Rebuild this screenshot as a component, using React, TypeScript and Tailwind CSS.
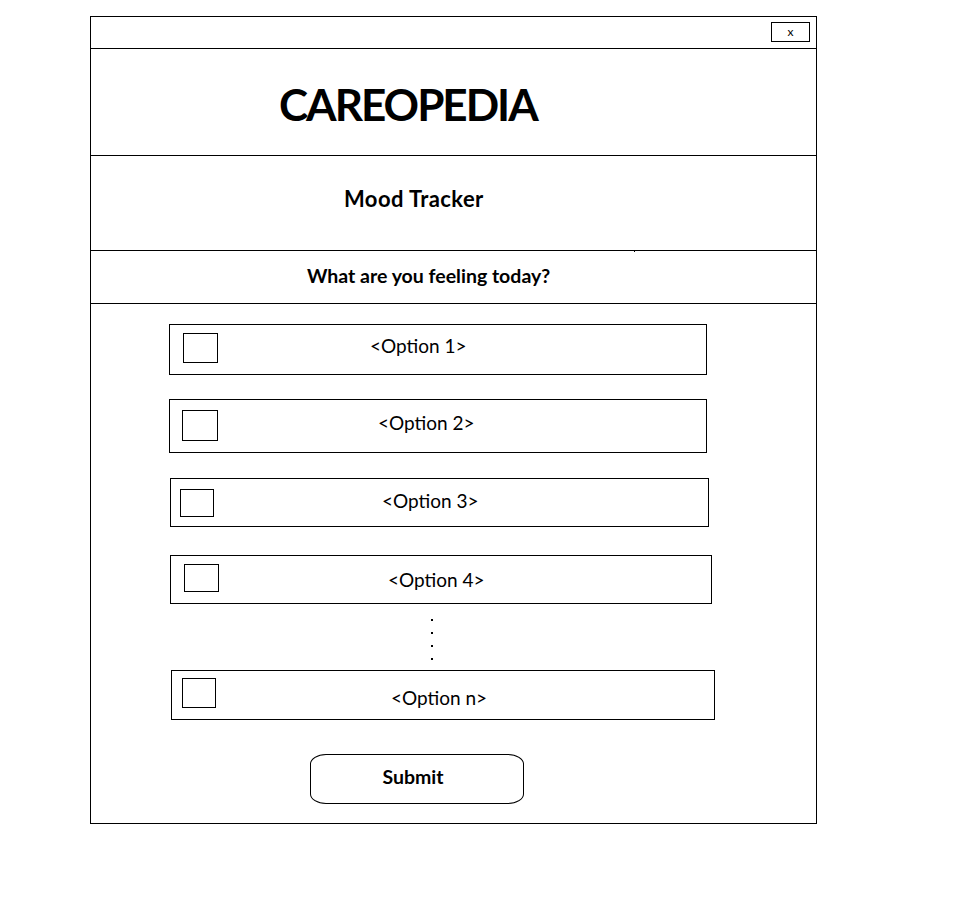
import React from 'react';

const OPTIONS = [
  { label: '<Option 1>', box: 'ml-[78px] w-[538px] h-[51px] mt-[20px]', cb: 'ml-[13px] mt-[8px] w-[35px] h-[30px]', text: 'ml-[152px] mb-[8px]' },
  { label: '<Option 2>', box: 'ml-[78px] w-[538px] h-[54px] mt-[24px]', cb: 'ml-[12px] mt-[10px] w-[36px] h-[31px]', text: 'ml-[160px] mb-[8px]' },
  { label: '<Option 3>', box: 'ml-[79px] w-[539px] h-[49px] mt-[25px]', cb: 'ml-[9px] mt-[10px] w-[34px] h-[28px]', text: 'ml-[168px] mb-[4px]' },
  { label: '<Option 4>', box: 'ml-[79px] w-[542px] h-[49px] mt-[28px]', cb: 'ml-[13px] mt-[8px] w-[35px] h-[28px]', text: 'ml-[169px]' },
];

const OptionRow = ({ label, box, cb, text }: { label: string; box: string; cb: string; text: string }) => (
  <div className={`flex items-start border border-black ${box}`}>
    <div className={`border border-black shrink-0 ${cb}`} />
    <span className={`self-center text-[19px] leading-none text-black ${text}`}>{label}</span>
  </div>
);

export default function App() {
  return (
    <div className="min-h-screen bg-white pt-[16px] pl-[90px]" style={{ fontFamily: 'Lato, "Noto Sans", sans-serif' }}>
      <div className="w-[727px] h-[808px] border border-black flex flex-col">
        {/* title bar */}
        <div className="h-[32px] border-b border-black flex justify-end items-start shrink-0">
          <button className="mt-[5px] mr-[6px] w-[39px] h-[20px] border border-black flex items-center justify-center text-[12px] leading-none text-black">
            x
          </button>
        </div>

        {/* logo */}
        <div className="h-[107px] border-b border-black flex items-center shrink-0">
          <h1 className="ml-[188px] mt-[4px] text-[44px] font-bold leading-none tracking-[-2px] text-black">CAREOPEDIA</h1>
        </div>

        {/* page title */}
        <div className="h-[95px] border-b border-black flex items-center shrink-0 relative">
          <h2 className="ml-[253px] mt-[-8px] text-[22px] font-bold leading-none tracking-[0.4px] text-black">Mood Tracker</h2>
          <div className="absolute left-[543px] -bottom-[2px] w-px h-[2px] bg-black" />
        </div>

        {/* question */}
        <div className="h-[53px] border-b border-black flex items-center shrink-0">
          <p className="ml-[216px] mt-[-2px] text-[19.5px] font-bold leading-none text-black">What are you feeling today?</p>
        </div>

        {/* options */}
        <div className="flex flex-col">
          {OPTIONS.map((o) => (
            <OptionRow key={o.label} {...o} />
          ))}

          <div className="h-[66px] ml-[340px] pt-[15px] flex flex-col gap-[11px]">
            <span className="w-[2px] h-[2px] bg-black" />
            <span className="w-[2px] h-[2px] bg-black" />
            <span className="w-[2px] h-[2px] bg-black" />
            <span className="w-[2px] h-[2px] bg-black" />
          </div>

          <OptionRow
            label="<Option n>"
            box="ml-[80px] w-[544px] h-[50px]"
            cb="ml-[10px] mt-[7px] w-[34px] h-[30px]"
            text="ml-[175px] mt-[4px]"
          />

          <button className="mt-[34px] ml-[219px] w-[214px] h-[50px] border border-black rounded-[16px/10px] flex items-center justify-center pr-[8px] pb-[4px] text-[19.5px] font-bold text-black">
            Submit
          </button>
        </div>
      </div>
    </div>
  );
}
